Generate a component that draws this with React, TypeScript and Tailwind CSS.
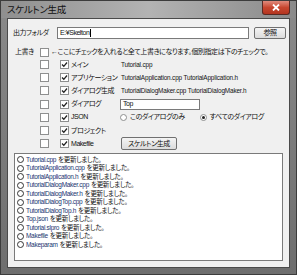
import React from 'react'

const font = "font-['Liberation_Sans','Noto_Sans_CJK_JP',sans-serif] [font-feature-settings:'palt']"

function Check({ checked }: { checked?: boolean }) {
  return (
    <span className="flex h-[9px] w-[9px] shrink-0 items-center justify-center border border-[#8e8f8f] bg-white">
      {checked && (
        <svg width="7" height="7" viewBox="0 0 7 7">
          <path d="M1 3.5 L2.8 5.3 L6 1.5" fill="none" stroke="#222" strokeWidth="1.3" />
        </svg>
      )}
    </span>
  )
}

function Radio({ checked }: { checked?: boolean }) {
  return (
    <span className="flex h-[7px] w-[7px] shrink-0 items-center justify-center rounded-full border border-[#8e8f8f] bg-white">
      {checked && <span className="h-[3px] w-[3px] rounded-full bg-[#222]" />}
    </span>
  )
}

const rows = [
  { label: 'メイン', right: 'Tutorial.cpp' },
  { label: 'アプリケーション', right: 'TutorialApplication.cpp TutorialApplication.h' },
  { label: 'ダイアログ生成', right: 'TutorialDialogMaker.cpp TutorialDialogMaker.h' },
  { label: 'ダイアログ', right: 'input' },
  { label: 'JSON', right: 'radio' },
  { label: 'プロジェクト', right: '' },
  { label: 'Makefile', right: 'button' },
]

const logs = [
  'Tutorial.cpp',
  'TutorialApplication.cpp',
  'TutorialApplication.h',
  'TutorialDialogMaker.cpp',
  'TutorialDialogMaker.h',
  'TutorialDialogTop.cpp',
  'TutorialDialogTop.h',
  'Top.json',
  'Tutorial.slpro',
  'Makefile',
  'Makeparam',
]

export default function App() {
  return (
    <div className={`flex h-[275px] w-[297px] flex-col border border-[#3c3c3c] bg-gradient-to-b from-[#8a8a8a] to-[#6e6e6e] text-[#111] ${font}`}>
      {/* title bar */}
      <div className="flex h-[17px] shrink-0 items-start justify-between bg-gradient-to-r from-[#8f8f8f] via-[#b3b3b3] to-[#8a8a8a] pl-[6px] pr-[6px]">
        <span className="pt-[3px] text-[9.5px] leading-[11px] tracking-[-0.3px] text-[#111]">スケルトン生成</span>
        <button className="flex h-[14px] w-[28px] items-center justify-center rounded-b-[3px] border border-t-0 border-[#5a2a24] bg-gradient-to-b from-[#e08a7c] via-[#c7462f] to-[#b43520]">
          <svg width="8" height="7" viewBox="0 0 8 7">
            <path d="M1 0.5 L7 6.5 M7 0.5 L1 6.5" stroke="#fff" strokeWidth="1.8" />
          </svg>
        </button>
      </div>

      {/* client area */}
      <div className="mx-[6px] mb-[6px] flex flex-1 flex-col whitespace-nowrap border border-[#4a4a4a] bg-[#f0f0f0] text-[7px] leading-[10px] tracking-[-0.45px]">
        <div className="mt-[8px] flex h-[12px] items-center pl-[5px]">
          <span className="w-[44px]">出力フォルダ</span>
          <div className="flex h-[12px] w-[192px] items-center border border-[#7a7a7a] bg-white pl-[2px]">
            E:¥Skelton<span className="ml-[1px] h-[8px] w-px bg-black" />
          </div>
          <button className="ml-[5px] flex h-[12px] w-[32px] items-center justify-center rounded-[2px] border border-[#707070] bg-gradient-to-b from-[#f4f4f4] to-[#dcdcdc]">
            参照
          </button>
        </div>

        <div className="mt-[8px] flex h-[10px] items-center pl-[7px]">
          <span className="w-[25px]">上書き</span>
          <Check />
          <span className="ml-[2px]">←ここにチェックを入れると全て上書きになります。個別指定は下のチェックで。</span>
        </div>

        <div className="mt-[1px] flex flex-col">
          {rows.map((r) => (
            <div key={r.label} className="flex h-[13.2px] items-center pl-[32px]">
              <Check />
              <span className="ml-[11px]">
                <Check checked />
              </span>
              <span className="ml-[2px] w-[49px]">{r.label}</span>
              {r.right === 'input' ? (
                <div className="flex h-[11px] w-[80px] items-center border border-[#7a7a7a] bg-white pl-[2px]">Top</div>
              ) : r.right === 'radio' ? (
                <div className="flex items-center">
                  <Radio />
                  <span className="ml-[3px]">このダイアログのみ</span>
                  <span className="ml-[15px]"><Radio checked /></span>
                  <span className="ml-[3px]">すべてのダイアログ</span>
                </div>
              ) : r.right === 'button' ? (
                <button className="ml-[1px] flex h-[13px] w-[56px] items-center justify-center rounded-[2px] border border-[#707070] bg-gradient-to-b from-[#f4f4f4] to-[#dcdcdc]">
                  スケルトン生成
                </button>
              ) : (
                <span className="ml-[1px] text-[6.4px] tracking-[-0.15px]">{r.right}</span>
              )}
            </div>
          ))}
        </div>

        <div className="mx-[6px] mt-[3px] mb-[6px] flex-1 border border-[#7a7a7a] bg-white pl-[2px] pt-px">
          {logs.map((l) => (
            <div key={l} className="flex h-[8.5px] items-center text-[6.5px] leading-[8px] tracking-[-0.3px]">
              <span className="h-[7px] w-[7px] shrink-0 rounded-full border border-[#333]" />
              <span className="ml-[2px] text-[#1a3470]">{l}</span>
              <span className="ml-[2px]">を更新しました。</span>
            </div>
          ))}
        </div>
      </div>
    </div>
  )
}
